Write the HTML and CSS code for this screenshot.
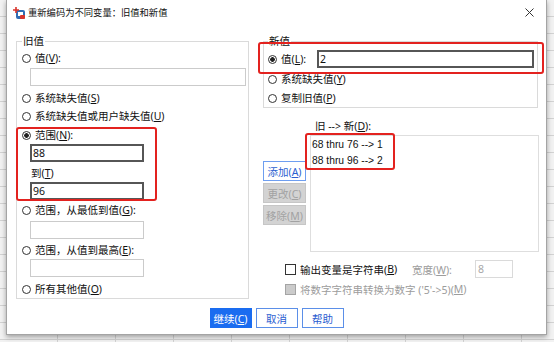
FILE: index.html
```html
<!DOCTYPE html>
<html lang="zh-CN">
<head>
    <meta charset="UTF-8">
    <title>重新编码为不同变量：旧值和新值</title>
    <link rel="stylesheet" href="styles.css">
</head>
<body>
<div class="dialog">
    <div class="titlebar">
        <svg class="appicon" width="12" height="12" viewBox="0 0 12 12">
            <rect x="3" y="3" width="9" height="9" rx="2" fill="#2f6db5"/>
            <rect x="5" y="5" width="5" height="4" fill="#fff"/>
            <rect x="7" y="8" width="5" height="4" rx="1" fill="#d9342b"/>
            <path d="M3 0v6M0 3h6" stroke="#d9342b" stroke-width="1.6"/>
        </svg>
        <span class="title">重新编码为不同变量：旧值和新值</span>
        <svg class="close" width="9" height="9" viewBox="0 0 9 9">
            <path d="M0.5 0.5l8 8M8.5 0.5l-8 8" stroke="#333" stroke-width="1"/>
        </svg>
    </div>

    <div class="main">
        <fieldset class="group oldval">
            <legend>旧值</legend>
            <div class="opt"><span class="radio"></span>值(<u>V</u>):</div>
            <div class="field wide mt1"></div>
            <div class="opt mt3"><span class="radio"></span>系统缺失值(<u>S</u>)</div>
            <div class="opt"><span class="radio"></span>系统缺失值或用户缺失值(<u>U</u>)</div>
            <div class="opt mt1"><span class="radio on"></span>范围(<u>N</u>):</div>
            <div class="field short dark">88</div>
            <div class="sub mt2">到(<u>T</u>)</div>
            <div class="field short dark">96</div>
            <div class="opt mt1"><span class="radio"></span>范围，从最低到值(<u>G</u>):</div>
            <div class="field short mt2"></div>
            <div class="opt mt2"><span class="radio"></span>范围，从值到最高(<u>E</u>):</div>
            <div class="field short"></div>
            <div class="opt mt3"><span class="radio"></span>所有其他值(<u>O</u>)</div>
        </fieldset>

        <div class="rightcol">
            <fieldset class="group newval">
                <legend>新值</legend>
                <div class="opt first"><span class="radio on"></span>值(<u>L</u>):<div class="field valbox dark">2</div></div>
                <div class="opt mt1"><span class="radio"></span>系统缺失值(<u>Y</u>)</div>
                <div class="opt mt1"><span class="radio"></span>复制旧值(<u>P</u>)</div>
            </fieldset>

            <div class="pairs">
                <div class="btncol">
                    <button class="sbtn add">添加(<u>A</u>)</button>
                    <button class="sbtn off">更改(<u>C</u>)</button>
                    <button class="sbtn off">移除(<u>M</u>)</button>
                </div>
                <div class="listcol">
                    <div class="listlabel">旧 --&gt; 新(<u>D</u>):</div>
                    <div class="list">
                        <div>68 thru 76 --&gt; 1</div>
                        <div>88 thru 96 --&gt; 2</div>
                    </div>
                </div>
            </div>

            <div class="chkrow">
                <span class="chklabel"><span class="chk"></span>输出变量是字符串(<u>B</u>)</span>
                <span class="grey">宽度(<u>W</u>):</span>
                <div class="field widthbox">8</div>
            </div>
            <div class="chkrow second grey">
                <span class="chk off"></span>将数字字符串转换为数字 ('5'-&gt;5)(<u>M</u>)
            </div>
        </div>
    </div>

    <div class="footer">
        <button class="btn primary">继续(<u>C</u>)</button>
        <button class="btn">取消</button>
        <button class="btn">帮助</button>
    </div>

    <!-- red annotation frames -->
    <div class="mark mark-range"></div>
    <div class="mark mark-new"></div>
    <div class="mark mark-list"></div>
</div>
</body>
</html>
```

FILE: styles.css
```css
* { box-sizing: border-box; }
body {
    margin: 0;
    width: 554px;
    height: 342px;
    overflow: hidden;
    font-family: "Noto Sans", "Noto Sans CJK SC", sans-serif;
    font-size: 10.5px;
    color: #111;
    background-color: #f2f2f2;
    background-image:
        repeating-linear-gradient(to bottom, transparent 0 16px, #d2d2d2 16px 17px),
        repeating-linear-gradient(to right, transparent 0 57px, #d2d2d2 57px 58px);
}
u { text-underline-offset: 1px; }

.dialog {
    position: relative;
    margin-left: 6px;
    width: 541px;
    height: 335px;
    background: #fff;
    border: 1px solid #a4a4a4;
    border-top: 0;
    box-shadow: 0 2px 5px rgba(0, 0, 0, .35);
}
.titlebar {
    height: 25px;
    display: flex;
    align-items: center;
}
.appicon { margin-left: 6px; flex: none; }
.title {
    margin-left: 3px;
    font-size: 9.3px;
    line-height: 14px;
}
.close { margin-left: auto; margin-right: 12px; }

.main {
    display: flex;
    align-items: flex-start;
    margin-top: 8px;
    padding-left: 9px;
}
.group {
    margin: 0;
    min-width: 0;
    border: 1px solid #dadada;
}
.group legend {
    padding: 0 1px;
    line-height: 16px;
}
.oldval {
    width: 233px;
    padding: 0 1px 0 5px;
}
.opt {
    display: flex;
    align-items: center;
    height: 18px;
    line-height: 18px;
    white-space: nowrap;
}
.radio {
    flex: none;
    width: 9px;
    height: 9px;
    margin-right: 4px;
    border: 1px solid #333;
    border-radius: 50%;
    background: #fff;
}
.radio.on { background: radial-gradient(circle, #222 0 2px, #fff 2.6px); }
.mt1 { margin-top: 1px; }
.mt2 { margin-top: 2px; }
.mt3 { margin-top: 3px; }

.field {
    height: 18px;
    margin-left: 8px;
    padding-left: 2px;
    border: 1px solid #cbcbcb;
    line-height: 16px;
    background: #fff;
}
.field.dark {
    border: 2px solid #565656;
    line-height: 14px;
    padding-left: 1px;
}
.wide { width: 216px; }
.short { width: 114px; }
.sub {
    height: 18px;
    line-height: 18px;
    padding-left: 9px;
}

.rightcol {
    width: 276px;
    margin-left: 14px;
}
.newval {
    width: 275px;
    padding: 0 3px 0 4px;
}
.newval .first { height: 20px; }
.valbox {
    width: 217px;
    margin-left: auto;
}

.pairs {
    display: flex;
    margin-top: 10px;
}
.btncol {
    display: flex;
    flex-direction: column;
    gap: 2px;
    width: 43px;
    margin-top: 43px;
}
.sbtn {
    height: 20px;
    padding: 0;
    font: inherit;
    border: 1px solid #c6c6c6;
    background: #d3d3d3;
    color: #a2a2a2;
}
.sbtn.add {
    border-color: #6e9ef0;
    background: #fff;
    color: #2c5fd0;
}
.listcol {
    width: 229px;
    margin-left: 4px;
}
.listlabel {
    height: 17px;
    line-height: 17px;
    padding-left: 5px;
}
.list {
    height: 117px;
    padding: 1px;
    border: 1px solid #dedede;
    font-family: "Liberation Sans", "Noto Sans CJK SC", sans-serif;
    font-size: 10.3px;
    line-height: 16px;
}

.chkrow {
    display: flex;
    align-items: center;
    height: 20px;
    margin-top: 7px;
    padding-left: 22px;
    white-space: nowrap;
}
.chkrow.second {
    height: 18px;
    margin-top: 1px;
}
.chklabel {
    display: flex;
    align-items: center;
    width: 127px;
}
.chk {
    flex: none;
    width: 11px;
    height: 11px;
    margin-right: 4px;
    border: 1px solid #333;
    background: #fff;
}
.chk.off {
    border-color: #a4a4a4;
    background: #cbcbcb;
}
.grey { color: #9c9c9c; }
.widthbox {
    width: 38px;
    margin-left: auto;
    margin-right: 26px;
    border-color: #dadada;
    color: #a8a8a8;
}

.footer {
    display: flex;
    justify-content: center;
    gap: 4px;
    margin-top: 9px;
}
.btn {
    width: 42px;
    height: 20px;
    padding: 0;
    font: inherit;
    border: 1px solid #5b8fe8;
    background: #fff;
    color: #2a5cd0;
}
.btn.primary {
    border-color: #1a6cf0;
    background: #1a6cf0;
    color: #fff;
}

.mark {
    position: absolute;
    border: 2px solid #e3221f;
    border-radius: 3px;
}
.mark-range { left: 9px; top: 127px; width: 141px; height: 74px; }
.mark-new { left: 251px; top: 42px; width: 286px; height: 32px; }
.mark-list { left: 298px; top: 133px; width: 90px; height: 37px; }
```
